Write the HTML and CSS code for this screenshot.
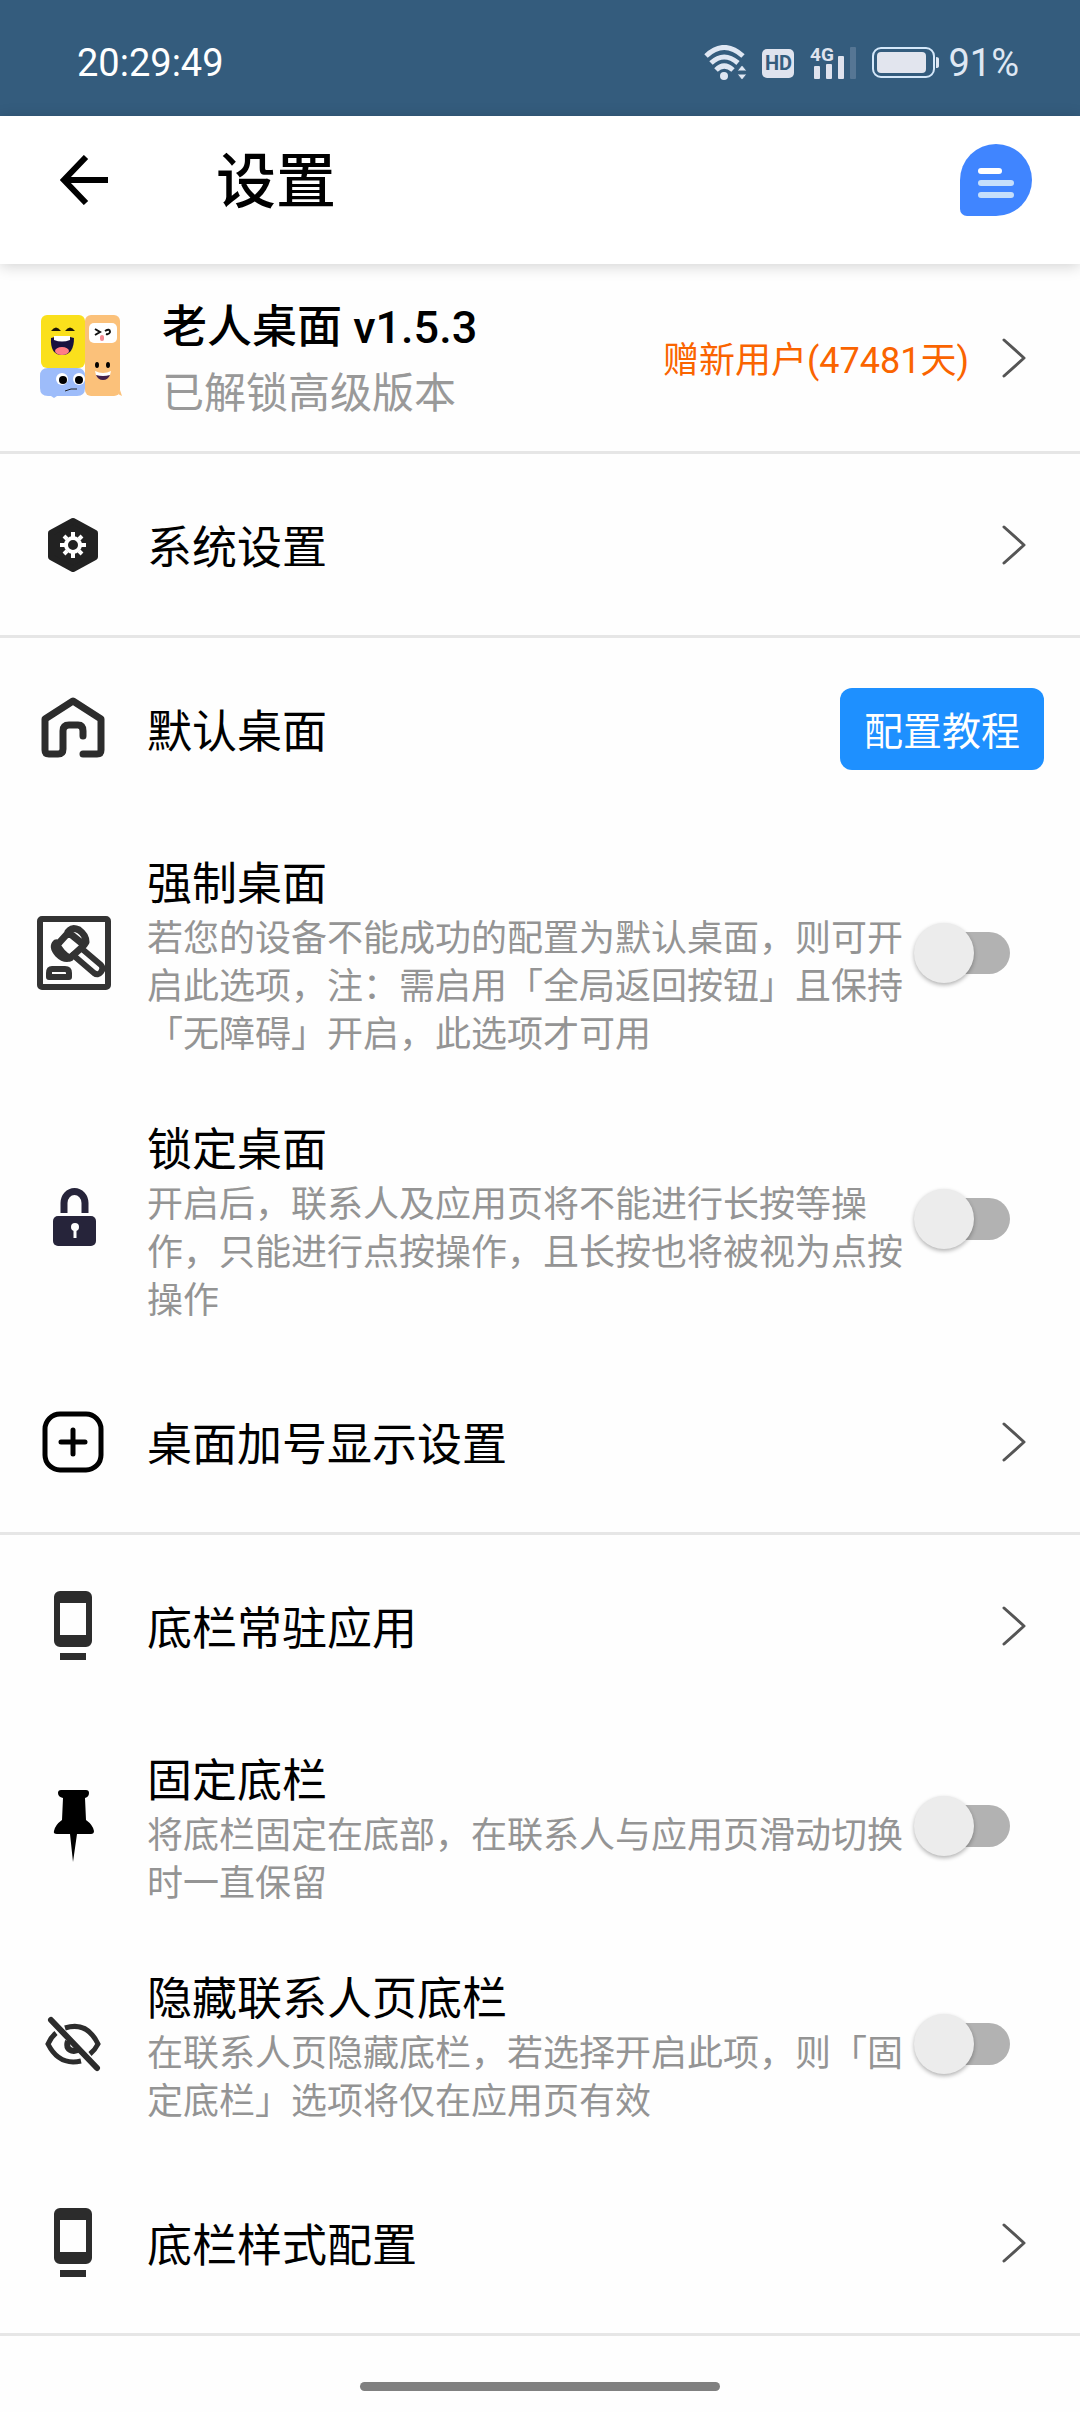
FILE: index.html
```html
<!DOCTYPE html>
<html lang="zh-CN">
<head>
<meta charset="utf-8">
<meta name="viewport" content="width=device-width, initial-scale=1">
<title>设置</title>
<link rel="stylesheet" href="styles.css">
</head>
<body>
<svg class="defs" aria-hidden="true">
  <symbol id="chevron" viewBox="0 0 26 42"><path d="M3 3 23 21 3 39" fill="none" stroke="#555" stroke-width="3" stroke-linecap="round" stroke-linejoin="round"/></symbol>
  <symbol id="dock" viewBox="0 0 72 72"><path fill="#2c2c2c" fill-rule="evenodd" d="M23 1h26a6 6 0 0 1 6 6v44a6 6 0 0 1-6 6H23a6 6 0 0 1-6-6V7a6 6 0 0 1 6-6zm0 12v32h26V13zM23 63h26v7H23z"/></symbol>
</svg>

<div class="statusbar">
  <time class="clock">20:29:49</time>
  <div class="status-icons">
    <svg width="44" height="36" viewBox="0 0 44 36" fill="none" stroke="#dfe7f3" stroke-width="5">
      <path d="M2 11Q20-6 39 11M7 18Q20 6 34 18M12 25Q20 17 29 25"/>
      <circle cx="20" cy="31" r="4" fill="#dfe7f3" stroke="none"/>
      <path d="M33 26l5-6 5 6zM33 29h10l-5 6z" fill="#dfe7f3" stroke="#345c7d" stroke-width="1"/>
    </svg>
    <span class="hd">HD</span>
    <svg class="signal" width="48" height="44" viewBox="0 -8 48 44" fill="#dfe3ee">
      <text x="0" y="16" class="net">4G</text>
      <rect x="4" y="21" width="6" height="13" rx="1"/><rect x="16" y="19" width="6" height="15" rx="1"/><rect x="28" y="11" width="6" height="23" rx="1"/><rect x="40" y="2" width="6" height="32" rx="1" opacity=".2"/>
    </svg>
    <svg class="battery" width="68" height="32" viewBox="0 0 68 32">
      <rect x="1" y="1" width="61" height="29" rx="8" fill="none" stroke="#d5e8fa" stroke-width="2"/><rect x="5" y="5" width="49" height="21" rx="4" fill="#e2e5ee"/><path d="M64 10q3 0 3 2v7q0 2-3 2z" fill="#dfe7f3"/>
    </svg>
    <span class="percent">91%</span>
  </div>
</div>

<header class="appbar">
  <button class="icon-btn back" aria-label="返回"><svg width="50" height="50" viewBox="0 0 50 50"><path d="M26 2 4 25 26 48M4 25H48" fill="none" stroke="#000" stroke-width="6"/></svg></button>
  <h1 class="title">设置</h1>
  <button class="icon-btn" aria-label="反馈"><svg width="72" height="72" viewBox="0 0 72 72"><path d="M36 0a36 36 0 0 1 0 72H7a7 7 0 0 1-7-7V36A36 36 0 0 1 36 0z" fill="#4085ff"/><path d="M21 27h18" stroke="#fff" stroke-width="6" stroke-linecap="round"/><path d="M21 39h30M21 51h30" stroke="#c6dffb" stroke-width="6" stroke-linecap="round"/></svg></button>
</header>

<main>
  <section class="group">
    <a class="row account" href="#">
      <svg class="icon" width="84" height="88" viewBox="0 0 84 88">
        <rect x="1" y="1" width="44" height="53" rx="6" fill="#fae01c"/>
        <rect x="45" y="1" width="35" height="81" rx="6" fill="#fbc17a"/>
        <path d="M80 76l2 6-4-2z" fill="#fbc17a"/>
        <rect x="49" y="9" width="28" height="20" rx="5" fill="#fff"/>
        <path d="M8 54h29q8 0 8 8v12q0 8-8 8H17l-3 2-3-2H8q-8 0-8-8V62q0-8 8-8z" fill="#9dbcfa"/>
        <path d="M11 17q5-7 10 0zM25 17q5-7 10 0z" fill="#1b1507"/>
        <path d="M11 24q11-4 23 0 0 17-12 17T11 24z" fill="#17123f"/><path d="M14 22h16v4q-8 3-16 0z" fill="#fff"/><ellipse cx="22" cy="37" rx="7" ry="4" fill="#ff7d86"/>
        <path d="M55 15l5 3-5 3M65 17q5-3 5 1-1 3-4 2" fill="none" stroke="#111" stroke-width="2"/><rect x="60" y="21" width="4" height="6" rx="2" fill="#f58a92"/>
        <ellipse cx="57" cy="51" rx="2" ry="3"/><ellipse cx="68" cy="51" rx="2" ry="3"/><path d="M55 57q8 4 16 0-1 8-8 8t-8-8z" fill="#fff"/><path d="M56 61q7 2 14 0-2 5-7 5t-7-5z" fill="#43204b"/>
        <circle cx="22" cy="65" r="6" fill="#fff"/><circle cx="39" cy="65" r="6" fill="#fff"/><circle cx="23" cy="66" r="4"/><circle cx="39" cy="66" r="4"/><path d="M25 77q6-3 12-2" fill="none" stroke="#222" stroke-width="1"/>
      </svg>
      <span class="text"><strong class="name">老人桌面 v1.5.3</strong><span class="sub">已解锁高级版本</span></span>
      <span class="gift">赠新用户(47481天)</span>
      <svg class="chev"><use href="#chevron"/></svg>
    </a>
  </section>

  <section class="group">
    <a class="row" href="#">
      <svg class="icon" viewBox="0 0 72 72"><path d="M36 12 58 24V48L36 60 14 48V24z" fill="#222" stroke="#222" stroke-width="6" stroke-linejoin="round"/><circle cx="36" cy="36" r="7" fill="none" stroke="#fff" stroke-width="4"/><path d="M36 23v5M36 44v5M23 36h5M44 36h5M27 27l3 3M42 42l3 3M45 27l-3 3M30 42l-3 3" stroke="#fff" stroke-width="4"/></svg>
      <span class="text label">系统设置</span>
      <svg class="chev"><use href="#chevron"/></svg>
    </a>
  </section>

  <section class="group">
    <div class="row">
      <svg class="icon" viewBox="0 0 72 72"><path d="M46 61H60Q64 61 64 57V26L36 8 8 26V57Q8 61 12 61H21Q26 61 26 56V38Q26 32 32 32H41Q46 32 46 38V43" fill="none" stroke="#2c2c2c" stroke-width="7" stroke-linecap="round" stroke-linejoin="round"/></svg>
      <span class="text label">默认桌面</span>
      <button class="guide">配置教程</button>
    </div>
    <label class="row">
      <svg class="icon icon-wide" viewBox="0 0 74 74"><g fill="none" stroke="#333" stroke-width="6" stroke-linejoin="round" stroke-linecap="round"><rect x="3" y="3" width="68" height="68" rx="2"/><path d="M33 14Q36 11 42 14 49 19 49 26L47 29 31 16zM31 17 21 28M43 33 33 42M19 27Q15 31 21 38 27 44 33 42 25 39 19 27z" stroke-width="7"/><path d="M36 39 57 57q4 3 7-1t0-7L44 32"/><path d="M15 53H28Q32 53 32 57V61H12V57Q12 53 15 53z"/></g></svg>
      <span class="text"><span class="label">强制桌面</span><span class="desc">若您的设备不能成功的配置为默认桌面，则可开启此选项，注：需启用「全局返回按钮」且保持「无障碍」开启，此选项才可用</span></span>
      <input class="switch" type="checkbox" role="switch">
    </label>
    <label class="row">
      <svg class="icon" viewBox="0 0 72 72"><path d="M27 30V20a10 11 0 0 1 21 0V30" fill="none" stroke="#26243a" stroke-width="7"/><rect x="16" y="33" width="43" height="30" rx="5" fill="#26243a"/><circle cx="38" cy="44" r="4" fill="#fff"/><path d="M38 45v10" stroke="#fff" stroke-width="3"/></svg>
      <span class="text"><span class="label">锁定桌面</span><span class="desc">开启后，联系人及应用页将不能进行长按等操作，只能进行点按操作，且长按也将被视为点按操作</span></span>
      <input class="switch" type="checkbox" role="switch">
    </label>
    <a class="row" href="#">
      <svg class="icon" viewBox="0 0 72 72"><rect x="8" y="8" width="56" height="56" rx="15" fill="none" stroke="#000" stroke-width="5"/><path d="M36 24V48M24 36H48" stroke="#000" stroke-width="5" stroke-linecap="round"/></svg>
      <span class="text label">桌面加号显示设置</span>
      <svg class="chev"><use href="#chevron"/></svg>
    </a>
  </section>

  <section class="group">
    <a class="row" href="#">
      <svg class="icon"><use href="#dock"/></svg>
      <span class="text label">底栏常驻应用</span>
      <svg class="chev"><use href="#chevron"/></svg>
    </a>
    <label class="row">
      <svg class="icon" viewBox="0 0 72 72"><path d="M24 0H49q3 0 3 3 0 4-4 5l1 22q7 5 8 11 0 3-3 3H40L36 72 33 44H20q-4 0-3-3 1-6 8-11l1-22q-5-1-5-5 0-3 3-3z"/></svg>
      <span class="text"><span class="label">固定底栏</span><span class="desc">将底栏固定在底部，在联系人与应用页滑动切换时一直保留</span></span>
      <input class="switch" type="checkbox" role="switch">
    </label>
    <label class="row">
      <svg class="icon" viewBox="0 0 72 72"><g fill="none" stroke="#2c2c2c" stroke-width="5"><path d="M28 20Q50 13 61 36 58 42 53 46M19 25Q14 29 11 36 22 58 44 53"/><path d="M31 33Q28 42 37 43 40 43 42 41" stroke-width="6"/><path d="M14 12 60 60" stroke-width="6" stroke-linecap="round"/></g></svg>
      <span class="text"><span class="label">隐藏联系人页底栏</span><span class="desc">在联系人页隐藏底栏，若选择开启此项，则「固定底栏」选项将仅在应用页有效</span></span>
      <input class="switch" type="checkbox" role="switch">
    </label>
    <a class="row" href="#">
      <svg class="icon"><use href="#dock"/></svg>
      <span class="text label">底栏样式配置</span>
      <svg class="chev"><use href="#chevron"/></svg>
    </a>
  </section>
</main>
<div class="home-bar"></div>
</body>
</html>
```
FILE: styles.css
```css
* { box-sizing: border-box; }

body {
  margin: 0;
  min-height: 100vh;
  display: flex;
  flex-direction: column;
  background: #fefefe;
  color: #000;
  font-family: Roboto, "Noto Sans CJK SC", sans-serif;
}

button { font: inherit; border: 0; cursor: pointer; }
svg { display: block; flex: none; }
.defs { position: absolute; width: 0; height: 0; }

.statusbar {
  display: flex;
  align-items: center;
  justify-content: space-between;
  height: 116px;
  padding: 10px 61px 0 77px;
  background: #345c7d;
  color: #fff;
  font-size: 38px;
  line-height: 48px;
}
.status-icons { display: flex; align-items: center; gap: 14px; }
.hd {
  width: 32px;
  height: 29px;
  border-radius: 5px;
  background: #dfe3ee;
  color: #345c7d;
  font-size: 20px;
  font-weight: 700;
  line-height: 29px;
  text-align: center;
}
.signal { margin: -8px 0 0 2px; }
.net { font-size: 19px; font-weight: 700; }
.battery { margin-right: -6px; }
.percent { color: #dfe7f3; }

.appbar {
  position: relative;
  display: flex;
  align-items: center;
  height: 148px;
  padding: 0 48px 20px 60px;
  background: #fff;
  box-shadow: 0 2px 14px rgba(0, 0, 0, .18);
}
.icon-btn { padding: 0; background: none; }
.title {
  flex: 1;
  margin: 0 0 0 106px;
  padding-top: 6px;
  font-size: 60px;
  font-weight: 500;
  line-height: 72px;
}

.group { border-bottom: 3px solid #e6e6e6; }
.row {
  display: flex;
  align-items: center;
  min-height: 181px;
  padding: 28px 36px 28px 37px;
  color: inherit;
  text-decoration: none;
}
.icon { width: 72px; height: 72px; margin-right: 38px; }
.icon-wide { width: 74px; height: 74px; margin-right: 36px; }
.text { flex: 1; min-width: 0; padding-top: 8px; }
.label { display: block; font-size: 45px; line-height: 60px; }
.desc { display: block; font-size: 36px; line-height: 48px; color: #949494; }
.chev { width: 26px; height: 42px; margin-right: 17px; }
label.row { padding-bottom: 26px; padding-top: 28px; }

.account { min-height: 187px; padding: 20px 36px 20px 40px; }
.account .icon { width: 84px; height: 88px; }
.account .text { padding-top: 6px; }
.name, .sub { display: block; line-height: 66px; }
.name { font-size: 45px; font-weight: 500; }
.sub { font-size: 42px; color: #999; }
.gift { margin-right: 32px; padding-top: 6px; font-size: 36px; line-height: 48px; color: #fa6400; }

.guide {
  width: 204px;
  height: 82px;
  padding: 0 0 2px;
  border-radius: 12px;
  background: #1e90ff;
  color: #fff;
  font-size: 39px;
}

.switch {
  appearance: none;
  flex: none;
  display: flex;
  align-items: center;
  width: 90px;
  height: 42px;
  margin: 0 34px 0 6px;
  border-radius: 21px;
  background: #b2b2b2;
}
.switch::before {
  content: "";
  width: 60px;
  height: 60px;
  margin-left: -6px;
  border-radius: 50%;
  background: #ececec;
  box-shadow: 0 2px 4px rgba(0, 0, 0, .3);
  flex: none;
}
.switch:checked { justify-content: flex-end; background: #8fc5fb; }
.switch:checked::before { background: #1e90ff; }

.home-bar {
  align-self: center;
  width: 33.333%;
  height: 9px;
  margin: 46px 0 21px;
  border-radius: 5px;
  background: #808080;
}
```
